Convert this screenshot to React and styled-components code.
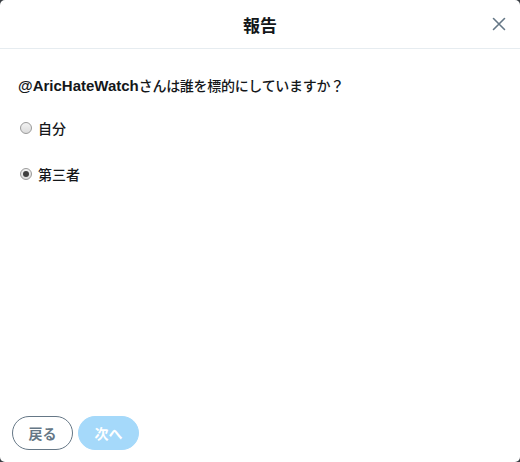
import styled, { createGlobalStyle } from "styled-components";
import { useState } from "react";

const GlobalStyle = createGlobalStyle`
  html, body {
    margin: 0;
    padding: 0;
    background-color: #3a3f44;
  }
  body {
    font-family: "Liberation Sans", Arial, "Noto Sans CJK JP", sans-serif;
    color: #14171a;
  }
`;

const options = [
  { id: "self", label: "自分" },
  { id: "third", label: "第三者" },
];

const App = () => {
  const [selected, setSelected] = useState("third");

  return (
    <>
      <GlobalStyle />
      <Dialog>
        <Header>
          <Title>報告</Title>
          <CloseBtn aria-label="閉じる">
            <svg width="16" height="16" viewBox="0 0 16 16">
              <path
                d="M2.5 2.5 L13.5 13.5 M13.5 2.5 L2.5 13.5"
                stroke="#657786"
                strokeWidth="1.6"
                strokeLinecap="round"
              />
            </svg>
          </CloseBtn>
        </Header>
        <Body>
          <Question>
            <UserName>@AricHateWatch</UserName>さんは誰を標的にしていますか？
          </Question>
          <OptionList>
            {options.map((opt) => (
              <OptionRow key={opt.id}>
                <Radio
                  type="radio"
                  name="target"
                  checked={selected === opt.id}
                  onChange={() => setSelected(opt.id)}
                />
                <OptionLabel>{opt.label}</OptionLabel>
              </OptionRow>
            ))}
          </OptionList>
        </Body>
        <Footer>
          <BackBtn>戻る</BackBtn>
          <NextBtn disabled>次へ</NextBtn>
        </Footer>
      </Dialog>
    </>
  );
};

const Dialog = styled.div`
  width: 520px;
  height: 462px;
  background-color: #ffffff;
  border-radius: 5px;
  display: flex;
  flex-direction: column;
  overflow: hidden;
`;

const Header = styled.div`
  height: 48px;
  flex-shrink: 0;
  display: flex;
  align-items: center;
  justify-content: center;
  position: relative;
  border-bottom: 1px solid #e6ecf0;
`;

const Title = styled.h1`
  margin: 0;
  font-family: "Noto Sans CJK JP", sans-serif;
  font-size: 17px;
  font-weight: 700;
  color: #14171a;
`;

const CloseBtn = styled.button`
  position: absolute;
  right: 12px;
  top: 15px;
  width: 18px;
  height: 18px;
  padding: 0;
  border: 0;
  background: transparent;
  display: flex;
  align-items: center;
  justify-content: center;
  cursor: pointer;
`;

const Body = styled.div`
  flex: 1;
  padding: 26px 18px 0;
`;

const Question = styled.p`
  margin: 0;
  font-family: "Noto Sans CJK JP", sans-serif;
  font-size: 14px;
  font-weight: 500;
  letter-spacing: -0.3px;
  line-height: 20px;
  color: #14171a;
`;

const UserName = styled.span`
  font-family: "Liberation Sans", Arial, sans-serif;
  font-size: 15px;
  font-weight: 700;
  letter-spacing: 0;
`;

const OptionList = styled.div`
  display: flex;
  flex-direction: column;
  gap: 26px;
  margin-top: 22px;
`;

const OptionRow = styled.label`
  display: flex;
  align-items: center;
  height: 20px;
  cursor: pointer;
`;

const Radio = styled.input`
  appearance: none;
  width: 12px;
  height: 12px;
  margin: 0 6px 0 2px;
  border-radius: 50%;
  border: 1px solid #9a9a9a;
  background: linear-gradient(#f2f2f2, #dcdcdc);
  position: relative;

  &:checked::after {
    content: "";
    position: absolute;
    left: 2px;
    top: 2px;
    width: 6px;
    height: 6px;
    border-radius: 50%;
    background-color: #3f3f3f;
  }
`;

const OptionLabel = styled.span`
  font-family: "Noto Sans CJK JP", sans-serif;
  font-size: 14px;
  font-weight: 500;
  color: #14171a;
`;

const Footer = styled.div`
  display: flex;
  gap: 5px;
  padding: 0 12px 12px;
`;

const PillBtn = styled.button`
  width: 61px;
  height: 34px;
  border-radius: 17px;
  font-family: "Noto Sans CJK JP", sans-serif;
  font-size: 14px;
  font-weight: 700;
  padding: 0;
`;

const BackBtn = styled(PillBtn)`
  background-color: #ffffff;
  border: 1px solid #657786;
  color: #657786;
`;

const NextBtn = styled(PillBtn)`
  background-color: #a5d9fa;
  border: 1px solid #a5d9fa;
  color: #ffffff;
`;

export default App;
